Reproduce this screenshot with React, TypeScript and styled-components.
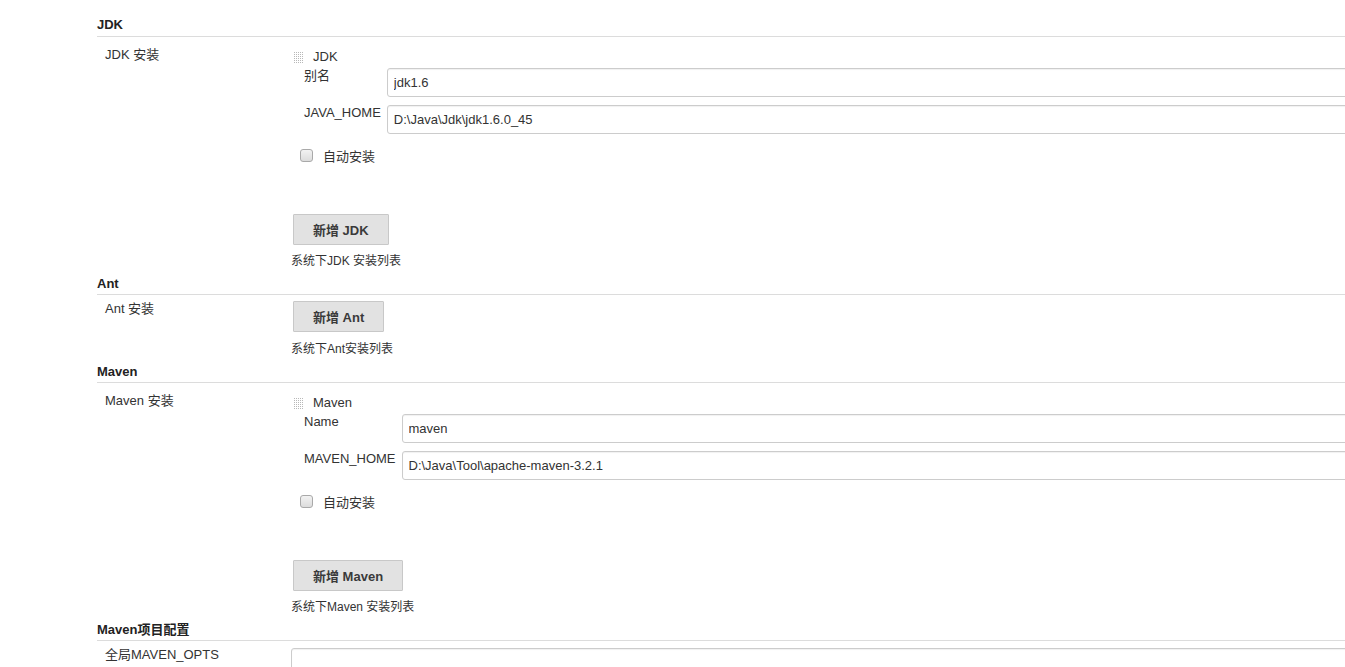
import React from "react";
import styled, { createGlobalStyle } from "styled-components";

const GlobalStyle = createGlobalStyle`
  html, body {
    margin: 0;
    padding: 0;
    overflow: hidden;
    background: #fff;
  }
  body {
    font-family: "Liberation Sans", Arial, "Noto Sans CJK SC", sans-serif;
    font-size: 13px;
    color: #333;
  }
`;

const Page = styled.div`
  width: 1700px;
  padding: 17px 0 0 97px;
`;

const SectionHeader = styled.div<{ $first?: boolean }>`
  font-weight: bold;
  font-size: 13px;
  line-height: 16px;
  color: #222;
  margin-top: ${(p) => (p.$first ? "0" : "7px")};
  padding-bottom: ${(p) => (p.$first ? "3px" : "2px")};
  border-bottom: 1px solid #dcdcdc;
`;

const Row = styled.div`
  display: grid;
  grid-template-columns: 194px 1fr;
  padding-top: 6px;
`;

const RowLabel = styled.div<{ $top: number }>`
  padding-left: 8px;
  padding-top: ${(p) => p.$top}px;
  line-height: 16px;
`;

const Settings = styled.div<{ $top: number }>`
  padding-top: ${(p) => p.$top}px;
`;

const ChunkTitle = styled.div`
  display: flex;
  align-items: center;
  gap: 9px;
  height: 16px;
  padding-left: 3px;
  line-height: 16px;
`;

const Fields = styled.div`
  display: grid;
  grid-template-columns: auto 1fr;
  column-gap: 6px;
  row-gap: 8px;
  margin-top: 3px;
  padding-left: 13px;
`;

const FieldLabel = styled.div`
  line-height: 16px;
  white-space: nowrap;
`;

const TextInput = styled.input`
  box-sizing: border-box;
  height: 29px;
  width: 100%;
  border: 1px solid #ccc;
  border-radius: 3px;
  box-shadow: inset 0 1px 1px rgba(0, 0, 0, 0.06);
  padding: 0 6px;
  font-family: inherit;
  font-size: 13px;
  color: #333;
  outline: none;
`;

const TextArea = styled.textarea`
  box-sizing: border-box;
  display: block;
  width: 100%;
  height: 60px;
  border: 1px solid #ccc;
  border-radius: 3px;
  box-shadow: inset 0 1px 1px rgba(0, 0, 0, 0.06);
  resize: none;
  font-family: inherit;
  font-size: 13px;
  outline: none;
`;

const CheckRow = styled.label`
  display: flex;
  align-items: center;
  gap: 10px;
  margin-top: 15px;
  padding-left: 9px;
  height: 16px;
  line-height: 16px;
`;

const Box = styled.span`
  box-sizing: border-box;
  width: 13px;
  height: 13px;
  margin-top: -3px;
  border: 1px solid #a9a9a9;
  border-radius: 3px;
  background: linear-gradient(#f2f2f2, #dcdcdc);
`;

const Button = styled.button<{ $top?: number }>`
  display: block;
  height: 31px;
  margin: ${(p) => p.$top ?? 0}px 0 0 2px;
  padding: 0 19px;
  border: 1px solid #c8c8c8;
  border-radius: 1px;
  background: #e2e2e2;
  font-family: inherit;
  font-weight: bold;
  font-size: 13px;
  color: #3a3a3a;
`;

const Description = styled.div<{ $gap?: number }>`
  margin-top: ${(p) => p.$gap ?? 9}px;
  font-size: 12px;
  line-height: 15px;
  color: #333;
`;

const Grip = () => (
  <svg width="10" height="11" viewBox="0 0 10 11">
    {Array.from({ length: 6 }).map((_, r) =>
      Array.from({ length: 5 }).map((_, c) => (
        <rect key={`${r}-${c}`} x={c * 2} y={r * 2} width="1" height="1" fill="#b8b8b8" />
      ))
    )}
  </svg>
);

type Field = { label: string; value: string };

const Installer = ({
  title,
  fields,
  addLabel,
  desc,
}: {
  title: string;
  fields: Field[];
  addLabel: string;
  desc: string;
}) => (
  <Settings $top={6}>
    <ChunkTitle>
      <Grip />
      <span>{title}</span>
    </ChunkTitle>
    <Fields>
      {fields.map((f) => (
        <React.Fragment key={f.label}>
          <FieldLabel>{f.label}</FieldLabel>
          <TextInput defaultValue={f.value} />
        </React.Fragment>
      ))}
    </Fields>
    <CheckRow>
      <Box />
      <span>自动安装</span>
    </CheckRow>
    <Button $top={49}>{addLabel}</Button>
    <Description>{desc}</Description>
  </Settings>
);

export default function App() {
  return (
    <>
      <GlobalStyle />
      <Page>
        <SectionHeader $first>JDK</SectionHeader>
        <Row>
          <RowLabel $top={4}>JDK 安装</RowLabel>
          <Installer
            title="JDK"
            fields={[
              { label: "别名", value: "jdk1.6" },
              { label: "JAVA_HOME", value: "D:\\Java\\Jdk\\jdk1.6.0_45" },
            ]}
            addLabel="新增 JDK"
            desc="系统下JDK 安装列表"
          />
        </Row>

        <SectionHeader>Ant</SectionHeader>
        <Row>
          <RowLabel $top={0}>Ant 安装</RowLabel>
          <Settings $top={0}>
            <Button>新增 Ant</Button>
            <Description $gap={10}>系统下Ant安装列表</Description>
          </Settings>
        </Row>

        <SectionHeader>Maven</SectionHeader>
        <Row>
          <RowLabel $top={4}>Maven 安装</RowLabel>
          <Installer
            title="Maven"
            fields={[
              { label: "Name", value: "maven" },
              { label: "MAVEN_HOME", value: "D:\\Java\\Tool\\apache-maven-3.2.1" },
            ]}
            addLabel="新增 Maven"
            desc="系统下Maven 安装列表"
          />
        </Row>

        <SectionHeader>Maven项目配置</SectionHeader>
        <Row>
          <RowLabel $top={0}>全局MAVEN_OPTS</RowLabel>
          <Settings $top={1}>
            <TextArea />
          </Settings>
        </Row>
      </Page>
    </>
  );
}
